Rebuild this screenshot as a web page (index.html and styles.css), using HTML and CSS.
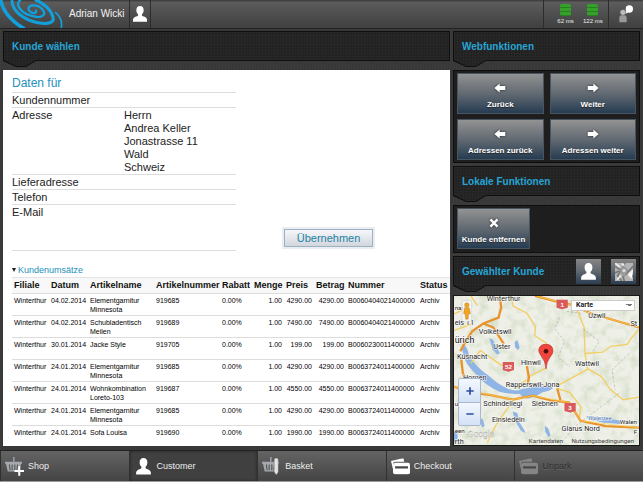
FILE: index.html
```html
<!DOCTYPE html>
<html lang="de">
<head>
<meta charset="utf-8">
<title>Kunde wählen</title>
<link rel="stylesheet" href="styles.css">
</head>
<body>
<svg class="defs" aria-hidden="true">
  <symbol id="person" viewBox="0 0 42 48"><path d="M21 0c-7 0-11 5-11 12 0 6 2 10 5 13 1 3 0 5-3 6C5 33 0 36 0 42v5h42v-5c0-6-5-9-12-11-3-1-4-3-3-6 3-3 5-7 5-13C32 5 28 0 21 0z"/></symbol>
  <symbol id="arrow" viewBox="0 0 34 28"><path d="M1 14 16 1v7h16v12H16v7z"/></symbol>
  <symbol id="basket" viewBox="0 0 52 48"><path d="M0 14h50v6h-3l-5 23H8L3 20H0z"/><path d="M24 0h4v14h-4z"/><path d="M13 22l2 17M21 22v17M29 22v17M37 22l-2 17" stroke="#4a4a4a" stroke-width="3"/></symbol>
  <symbol id="cards" viewBox="0 0 56 48"><path d="M0 8 34 0q4 0 4 4l1 6H12q-6 0-6 6v17z"/><path d="M12 13h38q6 0 6 6v22q0 6-6 6H12q-6 0-6-6V19q0-6 6-6z"/><path d="M12 23h38v7H12z" fill="#484848"/></symbol>
</svg>
<div class="app">
  <header class="topbar">
    <svg class="logo" viewBox="0 0 195 84" aria-hidden="true">
      <g fill="none" stroke="#12a0dc" stroke-linecap="round">
        <path d="M3 4C10 34 36 64 72 86" stroke-width="11"/>
        <path d="M36 4C38 34 72 60 114 68C144 74 164 68 159 52C154 30 132 10 108 0" stroke-width="9"/>
        <path d="M108 32C111 39 101 42 92 36C82 30 83 17 99 16C121 15 139 36 130 46C119 58 79 46 64 31C52 19 51 8 61 0" stroke-width="7"/>
        <path d="M167 38C182 51 187 66 184 82" stroke-width="5"/>
      </g>
    </svg>
    <span class="user">Adrian Wicki</span>
    <button class="user-button" aria-label="Benutzer"><svg><use href="#person"/></svg></button>
    <div class="status">
      <div class="ping"><i></i>62 ms</div>
      <div class="ping"><i></i>122 ms</div>
    </div>
    <button class="chat" aria-label="Chat">
      <svg viewBox="0 0 42 52"><circle cx="31" cy="11" r="11" fill="#fff"/><path d="M22 17l-2 8 8-4z" fill="#fff"/><circle cx="12" cy="21" r="8" fill="#bbb"/><path d="M1 51V37q0-7 7-7h8q7 0 7 7v14z" fill="#999"/></svg>
    </button>
  </header>

  <main class="main">
    <section class="column">
      <h1 class="plate">Kunde wählen</h1>
      <div class="sheet">
        <div class="customer">
          <div class="details">
            <h2>Daten für</h2>
            <dl>
              <div><dt>Kundennummer</dt><dd></dd></div>
              <div><dt>Adresse</dt><dd>Herrn<br>Andrea Keller<br>Jonastrasse 11<br>Wald<br>Schweiz</dd></div>
              <div><dt>Lieferadresse</dt><dd></dd></div>
              <div><dt>Telefon</dt><dd></dd></div>
              <div class="last"><dt>E-Mail</dt><dd></dd></div>
            </dl>
          </div>
          <button class="accept">Übernehmen</button>
        </div>
        <h3><span class="caret"></span>Kundenumsätze</h3>
        <table>
          <colgroup><col class="c-branch"><col class="c-date"><col class="c-name"><col class="c-name"><col class="c-num"><col class="c-num"><col class="c-price"><col class="c-num"><col class="c-ref"><col></colgroup>
          <thead><tr><th>Filiale</th><th>Datum</th><th>Artikelname</th><th>Artikelnummer</th><th>Rabatt</th><th>Menge</th><th>Preis</th><th class="r">Betrag</th><th>Nummer</th><th>Status</th></tr></thead>
          <tbody>
            <tr><td>Winterthur</td><td>04.02.2014</td><td>Elementgarnitur<br>Minnesota</td><td>919685</td><td>0.00%</td><td class="r">1.00</td><td class="r">4290.00</td><td class="r">4290.00</td><td>B0060404021400000</td><td>Archiv</td></tr>
            <tr><td>Winterthur</td><td>04.02.2014</td><td>Schubladentisch<br>Meilen</td><td>919689</td><td>0.00%</td><td class="r">1.00</td><td class="r">7490.00</td><td class="r">7490.00</td><td>B0060404021400000</td><td>Archiv</td></tr>
            <tr><td>Winterthur</td><td>30.01.2014</td><td>Jacke Style</td><td>919705</td><td>0.00%</td><td class="r">1.00</td><td class="r">199.00</td><td class="r">199.00</td><td>B0060230011400000</td><td>Archiv</td></tr>
            <tr><td>Winterthur</td><td>24.01.2014</td><td>Elementgarnitur<br>Minnesota</td><td>919685</td><td>0.00%</td><td class="r">1.00</td><td class="r">4290.00</td><td class="r">4290.00</td><td>B0063724011400000</td><td>Archiv</td></tr>
            <tr><td>Winterthur</td><td>24.01.2014</td><td>Wohnkombination<br>Loreto-103</td><td>919687</td><td>0.00%</td><td class="r">1.00</td><td class="r">4550.00</td><td class="r">4550.00</td><td>B0063724011400000</td><td>Archiv</td></tr>
            <tr><td>Winterthur</td><td>24.01.2014</td><td>Elementgarnitur<br>Minnesota</td><td>919685</td><td>0.00%</td><td class="r">1.00</td><td class="r">4290.00</td><td class="r">4290.00</td><td>B0063724011400000</td><td>Archiv</td></tr>
            <tr><td>Winterthur</td><td>24.01.2014</td><td>Sofa Louisa</td><td>919690</td><td>0.00%</td><td class="r">1.00</td><td class="r">1990.00</td><td class="r">1990.00</td><td>B0063724011400000</td><td>Archiv</td></tr>
          </tbody>
        </table>
      </div>
    </section>

    <aside class="column">
      <h2 class="plate">Webfunktionen</h2>
      <div class="panel">
        <button class="tile"><svg><use href="#arrow"/></svg>Zurück</button>
        <button class="tile"><svg class="flip"><use href="#arrow"/></svg>Weiter</button>
        <button class="tile"><svg><use href="#arrow"/></svg>Adressen zurück</button>
        <button class="tile"><svg class="flip"><use href="#arrow"/></svg>Adressen weiter</button>
      </div>
      <h2 class="plate">Lokale Funktionen</h2>
      <div class="panel local">
        <button class="tile"><svg viewBox="0 0 34 28"><path d="M7 4l20 20M27 4 7 24" stroke="#fff" stroke-width="7"/></svg>Kunde entfernen</button>
      </div>
      <div class="plate">
        <h2>Gewählter Kunde</h2>
        <button class="mini" aria-label="Kunde"><svg viewBox="0 0 42 48"><use href="#person"/></svg></button>
        <button class="mini" aria-label="Karte"><svg class="thumb" viewBox="0 0 54 54"><path fill="#b5b5b5" d="M0 0h54v54H0z"/><path d="M0 10l18 12L8 38l12 16M30 0l-8 18 18 8 14-16M54 40L36 30 24 40l4 14M0 30l12-6" stroke="#777" stroke-width="5" fill="none"/><path d="M0 0l14 12M54 22L40 34l10 12M6 50l12-12M20 2l8 6" stroke="#eee" stroke-width="5"/><path d="M27 12q12 0 11 11-1 8-11 20-10-12-11-20 0-11 11-11z" fill="#999"/><circle cx="27" cy="23" r="5" fill="#ddd"/></svg></button>
      </div>
      <div class="map">
        <svg class="map-canvas" viewBox="9 15 561 453" preserveAspectRatio="xMidYMid slice">
          <defs>
            <filter id="relief" x="0" y="0" width="1" height="1"><feTurbulence type="fractalNoise" baseFrequency=".035" numOctaves="3" seed="4"/><feColorMatrix values="0 0 0 0 .58  0 0 0 0 .68  0 0 0 0 .5  1.6 0 0 0 -.7"/></filter>
          </defs>
          <path fill="#eeefe6" d="M9 15h561v453H9z"/>
          <path d="M9 15h561v453H9z" filter="url(#relief)"/>
          <g fill="#8fb4e6">
            <path d="M36 160q12 8 19 35 18 33 58 62 28 26 56 38 25 12 44 3 40-10 72-8 22-2 24 5-10 9-30 12-18 13-42 19-16 4-28-14-32 2-62-6-42-18-72-54-32-30-38-60-6-18-1-32z"/>
            <path d="M116 143l12 6 8 18 12 22-8 4-14-16zM193 155l8-6 7 22-5 9-9-10zM187 366l14 4 5 26 16 26 4 10-14-8-18-30zM284 410l10 6 8 22-6 6-10-16zM410 380l60 6 44 8v10l-50-4-44-10zM86 385l10 4 6 20-8 6zM9 425l10 6 2 24-12 8z"/>
          </g>
          <g fill="none" stroke="#f2cf62" stroke-width="4">
            <path d="M182 16l6 30 42 22 26 40-2 28 34 22 16 30M362 30l24 36 18 46 2 78 8 48-52 28-40 22M406 190l54-4 24-18 50-6 14-20 22-26M414 236l42 24 26 38 40 32 48-8M9 120l52-18M88 180l60 42 32 12M234 262l32-18 22-10M320 296l40 12 34 44-6 40M228 270l-30 24M190 330l-50 70-30 60M60 220l30-40M9 70l30-14M60 15l20 30"/>
          </g>
          <g fill="none" stroke="#e9932b" stroke-width="7">
            <path d="M148 15l4 36-8 30-46 18-34 24-22 34-14 26M98 99l30 12 32 50M255 15l60 16 55 12 50 24 54 16 96 28M9 290l46 18 66 8 66 14 60-12 56 14 54 6 36 56 76 16 102 5M230 228l6 34-4 24M322 296l10 36M30 200l6 50 28 58"/>
          </g>
          <g fill="none" stroke="#ffd65a" stroke-width="2"><path d="M260 16l110 28 50 24 150 42M9 290l112 26 66 14 60-12 110 20 36 56 178 21"/></g>
          <g fill="none" stroke="#777" stroke-width="1" stroke-dasharray="8 5"><path d="M330 80l-16 34 30 40-20 48 36 28M350 62l44 6M400 115l50 38-20 30M510 310l-80 60-60 46-40 52M540 190l-52 50 10 60"/></g>
          <g class="roads"><path d="M320 27h34v24l-17 5-17-5zM157 216h34v24l-17 5-17-5zM344 340h34v24l-17 5-17-5z"/><text x="337" y="49">1</text><text x="174" y="237">52</text><text x="361" y="362">3</text></g>
          <g class="towns">
            <text x="108" y="31">Winterthur</text><text x="11" y="57" class="small">nas</text><text x="11" y="103">eis 11</text><text x="84" y="132">Volketswil</text><text x="11" y="157" class="city">ürich</text><text x="128" y="177">Uster</text><text x="18" y="206">Küsnacht</text><text x="212" y="225">Hinwil</text><text x="376" y="228">Wattwil</text><text x="416" y="82">Uzwil</text><text x="544" y="107">St</text><text x="36" y="269">Horgen</text><text x="166" y="293">Rapperswil-Jona</text><text x="98" y="350">Schindellegi</text><text x="245" y="350">Siebnen</text><text x="124" y="398">Einsiedeln</text><text x="335" y="426">Glarus Nord</text><text x="512" y="403" class="small">Walen</text><text x="416" y="391" class="lake">Walensee</text><text x="11" y="430" class="small">een</text><text x="11" y="463">rth</text><text x="11" y="350" class="small">u</text><text x="554" y="433" class="small">F</text>
          </g>
          <text x="50" y="444" class="brand">Google</text>
          <g class="legal"><text x="236" y="461">Kartendaten</text><text x="365" y="461">Nutzungsbedingungen</text></g>
          <path d="M288 236q-2-24-14-38-8-11-8-18 2-18 22-18t21 20q0 8-8 18-12 15-13 36z" fill="#f0453c" stroke="#b92b26" stroke-width="2"/><circle cx="288" cy="183" r="7" fill="#4c0c0a"/>
          <path d="M34 30h28v62H34z" fill="#f7f7f7" stroke="#bbb"/><g fill="#f0a41f" stroke="#a86b10"><circle cx="48" cy="43" r="7"/><path d="M41 51h14l4 18-6 2-1 15h-8l-1-15-5-2z"/></g>
        </svg>
        <select class="map-type" aria-label="Kartentyp"><option>Karte</option></select>
        <div class="zoom"><button aria-label="Vergrössern"><svg viewBox="0 0 24 24"><path d="M12 1v22M1 12h22"/></svg></button><button aria-label="Verkleinern"><svg viewBox="0 0 24 24"><path d="M1 12h22"/></svg></button></div>
      </div>
    </aside>
  </main>

  <nav class="tabs">
    <a href="#shop"><svg viewBox="0 0 56 56"><use href="#basket" width="52" height="48" fill="#a5a8ac"/><path d="M42 27v28M28 41h28" stroke="#fff" stroke-width="6"/></svg>Shop</a>
    <a href="#customer" class="active"><svg viewBox="-6 0 54 48"><use href="#person" width="42" height="48" fill="#fff"/></svg>Customer</a>
    <a href="#basket"><svg viewBox="0 0 56 56"><use href="#basket" width="52" height="48" fill="#a5a8ac"/><path d="M36 6q6-6 12 0v38l-6 9-6-9z" fill="#e4e4e4" stroke="#555"/></svg>Basket</a>
    <a href="#checkout"><svg viewBox="0 0 56 48"><use href="#cards" fill="#fff"/></svg>Checkout</a>
    <a href="#unpark" class="disabled"><svg viewBox="0 0 56 48"><use href="#cards" fill="#858585"/></svg>Unpark</a>
  </nav>
</div>
</body>
</html>
```
FILE: styles.css
```css
* { box-sizing: border-box; }
body { margin: 0; background: #383838; font-family: "Liberation Sans", Arial, sans-serif; }
h1, h2, h3, dl, dd { margin: 0; font-weight: normal; }
button { border: 0; padding: 0; font-family: inherit; }
.defs { position: absolute; width: 0; height: 0; }
.app { min-height: 100vh; display: flex; flex-direction: column; }

.topbar { display: flex; align-items: stretch; height: 29px; background: linear-gradient(#383838, #5c5c5c 8%, #505050 45%, #404040); border-bottom: 1px solid #222; }
.logo { width: 65px; height: 28px; }
.user { padding: 0 4px; line-height: 28px; font-size: 10px; color: #f2f2f2; }
.user-button { width: 22px; display: grid; place-items: center; background: none; border: solid #2c2c2c; border-width: 0 1px; }
.user-button svg { width: 14px; height: 16px; fill: #fff; }
.status { margin-left: auto; display: flex; justify-content: space-evenly; width: 66px; border: solid #2c2c2c; border-width: 0 1px; padding: 4px 4px 0 12px; gap: 8px; }
.ping { font-size: 6px; line-height: 11px; color: #eee; text-align: center; white-space: nowrap; }
.ping i { display: block; width: 11px; height: 12px; margin: 0 auto; background: repeating-linear-gradient(#35a02a 0 3px, #278020 3px 4px); border-radius: 2px; }
.chat { width: 34px; background: none; display: grid; place-items: center; }
.chat svg { width: 14px; height: 18px; }

.main { flex: 1; display: grid; grid-template-columns: minmax(0, 1fr) 187px; gap: 3px; padding: 2px 3px 4px; background: repeating-linear-gradient(90deg, #ffffff05 0 1px, transparent 1px 3px), #383838; }
.column { display: flex; flex-direction: column; min-width: 0; }
.plate { position: relative; z-index: 0; display: flex; align-items: center; height: 36px; margin-bottom: 3px; padding: 0 4px 5px 9px; color: #27a5d4; font-size: 10px; font-weight: bold; background: #0e0e0e; clip-path: polygon(0 0, 100% 0, 100% 30px, 33px 30px, 23px 36px, 13px 36px, 0 30px); }
.plate::before { content: ""; position: absolute; z-index: -1; inset: 1px; background: repeating-linear-gradient(#ffffff05 0 1px, transparent 1px 3px), repeating-linear-gradient(90deg, #ffffff05 0 1px, transparent 1px 3px), #222; clip-path: polygon(0 0, 100% 0, 100% 28px, 32px 28px, 22px 34px, 12px 34px, 0 28px); }
.plate h2 { flex: 1; font-size: 10px; font-weight: bold; }

.sheet { flex: 1; background: #fff; padding: 5px 0 0 9px; color: #222; }
.customer { display: flex; align-items: flex-end; }
.details { width: 224px; }
.details h2 { font-size: 12px; line-height: 17px; color: #2490bd; }
.details dl > div { display: flex; border-top: 1px solid #ddd; font-size: 11px; line-height: 13px; padding-top: 1px; }
.details .last { height: 47px; border-bottom: 1px solid #ddd; }
.details dt { width: 112px; }
.accept { margin: 0 0 2px 46px; width: 93px; height: 22px; color: #2482a3; font-size: 11px; background: linear-gradient(#f8f9fb, #d0d4dc); border: 2px solid #e8eef4; outline: 1px solid #9fb1bf; outline-offset: -3px; }
.sheet h3 { display: flex; align-items: center; gap: 2px; margin-top: 12px; height: 14px; font-size: 9px; color: #2490bd; }
.caret { border: 2px solid transparent; border-top: 4px solid #222; border-bottom: 0; }
table { width: 100%; table-layout: fixed; border-collapse: collapse; }
th, td { text-align: left; vertical-align: top; white-space: nowrap; padding: 0 2px; }
th { height: 15px; font-size: 9px; line-height: 15px; color: #111; }
thead tr { background: #f8f8f8; border-top: 1px solid #e4e4e4; }
td { height: 22px; font-size: 7px; line-height: 9px; padding-top: 2px; border-top: 1px solid #ddd; color: #000; }
tr:last-child td { height: 19px; }
.r { text-align: right; }
.c-branch { width: 37px; }
.c-date { width: 39px; }
.c-name { width: 66px; }
.c-num { width: 32px; }
.c-price { width: 30px; }
.c-ref { width: 72px; }

.panel { display: grid; grid-template-columns: 1fr 1fr; gap: 5px 6px; margin-bottom: 3px; padding: 2px 3px; background: #1e1e1e; border: 1px solid #0e0e0e; }
.panel.local { grid-template-columns: 73px; padding-bottom: 3px; }
.tile { display: flex; flex-direction: column; align-items: center; justify-content: space-between; height: 41px; padding: 9px 0 3px; color: #fff; font-size: 8px; line-height: 10px; font-weight: bold; white-space: nowrap; background: linear-gradient(#929292, #626a72 50%, #263c52); border: 1px solid #485460; text-shadow: 0 1px 1px #222; }
.tile svg { width: 12px; height: 10px; fill: #fff; filter: drop-shadow(0 0 1px #222); }
.tile .flip { transform: scaleX(-1); }
.mini { width: 25px; height: 25px; margin-left: 10px; display: grid; place-items: center; background: linear-gradient(#858585, #5f676f 50%, #2a3d50); }
.mini svg { width: 15px; height: 17px; fill: #fff; }
.mini .thumb { width: 18px; height: 18px; }

.map { position: relative; flex: 1; min-height: 151px; background: #e9ebdf; border: 1px solid #181818; overflow: hidden; }
.map-canvas { position: absolute; inset: 0; width: 100%; height: 100%; }
.towns text { font-size: 22px; fill: #222; stroke: #fff; stroke-width: 3px; paint-order: stroke; font-family: Roboto, sans-serif; }
.towns .city { font-size: 27px; fill: #111; }
.towns .small { font-size: 19px; }
.towns .lake { font-size: 17px; fill: #416ca8; font-style: italic; }
.roads path { fill: #d85a5a; }
.roads text { font-size: 19px; font-weight: bold; text-anchor: middle; fill: #fff; }
.brand { font-size: 25px; fill: #fff; stroke: #aaa; stroke-width: 1px; }
.legal text { font-size: 19px; fill: #444; font-family: Roboto, sans-serif; }
.map-type { position: absolute; top: 4px; right: 4px; width: 64px; height: 11px; padding: 0 4px; appearance: none; border: 1px solid #ccc; border-radius: 0; font: bold 7px/9px Roboto, sans-serif; color: #222; background: linear-gradient(45deg, transparent 50%, #777 50%) right 5px top 3px / 3px 3px no-repeat, linear-gradient(-45deg, transparent 50%, #777 50%) right 2px top 3px / 3px 3px no-repeat, #fff; }
.zoom { position: absolute; left: 4px; top: 82px; width: 23px; display: flex; flex-direction: column; border: 1px solid #a9b8d0; border-radius: 2px; overflow: hidden; }
.zoom button { height: 23px; display: grid; place-items: center; background: linear-gradient(#f4f8ff, #d3e1f5); }
.zoom button + button { border-top: 1px solid #a9b8d0; }
.zoom svg { width: 8px; height: 8px; stroke: #2b4fa0; stroke-width: 5; }

.tabs { display: grid; grid-template-columns: repeat(5, 1fr); height: 32px; border-bottom: 1px solid #999; border-top: 1px solid #222; }
.tabs a { display: flex; align-items: center; gap: 4px; padding-left: 4px; font-size: 9px; color: #eee; text-decoration: none; background: linear-gradient(#646464, #444); border-left: 1px solid #303030; }
.tabs svg { width: 19px; height: 19px; }
.tabs .active { background: #404040; box-shadow: inset 0 0 3px #222; }
.tabs .disabled { color: #2f2f2f; text-shadow: 0 1px 0 #666; }
```
